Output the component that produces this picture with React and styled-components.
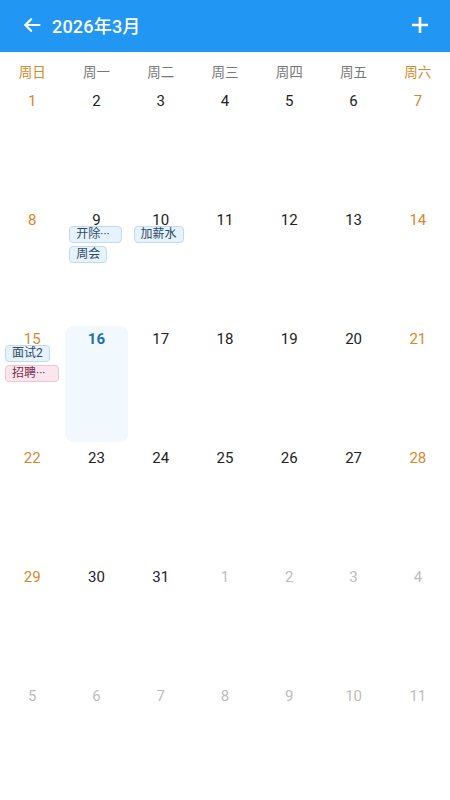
import React from "react";
import styled, { createGlobalStyle } from "styled-components";

const Global = createGlobalStyle`
  html, body { margin: 0; padding: 0; background: #fff; }
  body { font-family: Roboto, "Noto Sans CJK SC", sans-serif; }
  * { box-sizing: border-box; }
`;

const Page = styled.div`
  width: 450px;
  height: 800px;
  display: flex;
  flex-direction: column;
  background: #fff;
  overflow: hidden;
`;

const Header = styled.header`
  height: 52px;
  background: #2196f3;
  display: flex;
  align-items: center;
  padding: 0 18px 2px 20px;
  color: #fff;
  flex-shrink: 0;
`;

const IconBtn = styled.div`
  width: 24px;
  height: 24px;
  display: flex;
  align-items: center;
  justify-content: center;
`;

const Title = styled.h1`
  margin: 0 0 0 8px;
  font-size: 18px;
  font-weight: 500;
  flex: 1;
  letter-spacing: 0.2px;
`;

const WeekRow = styled.div`
  display: grid;
  grid-template-columns: repeat(7, 1fr);
  height: 36px;
  align-items: center;
  flex-shrink: 0;
`;

const WeekLabel = styled.div`
  text-align: center;
  font-size: 13.5px;
  color: ${(p) => (p.$weekend ? "#d4892a" : "#777")};
  padding-top: 2px;
`;

const Grid = styled.div`
  flex-shrink: 0;
  display: grid;
  grid-template-columns: repeat(7, 1fr);
  grid-template-rows: repeat(6, 119px);
`;

const Cell = styled.div`
  position: relative;
  display: flex;
  flex-direction: column;
  align-items: center;
  padding: 7px 0 0;
  margin: 0 1px 3px;
  border-radius: 8px;
  background: ${(p) => (p.$today ? "#f1f8fe" : "transparent")};
  min-width: 0;
`;

const DayNum = styled.div`
  font-size: 15px;
  line-height: 12px;
  font-weight: ${(p) => (p.$today ? 700 : 400)};
  color: ${(p) =>
    p.$today ? "#1e6fb4" : p.$other ? "#bdbdbd" : p.$weekend ? "#d4892a" : "#222"};
`;

const Events = styled.div`
  align-self: stretch;
  display: flex;
  flex-direction: column;
  align-items: flex-start;
  gap: 3px;
  padding: 0 4px;
`;

const Chip = styled.div`
  height: 17px;
  line-height: 15px;
  font-size: 12px;
  padding: 0 6px;
  border-radius: 4px;
  white-space: nowrap;
  border: 1px solid ${(p) => (p.$pink ? "#f2c4d3" : "#bcdcf4")};
  background: ${(p) => (p.$pink ? "#fce6ee" : "#e6f2fc")};
  color: ${(p) => (p.$pink ? "#7a3050" : "#2d4a66")};
`;

const events = {
  9: [{ t: "开除···", w: 53 }, { t: "周会" }],
  10: [{ t: "加薪水" }],
  15: [{ t: "面试2" }, { t: "招聘···", pink: true, w: 54 }],
};

const weekDays = ["周日", "周一", "周二", "周三", "周四", "周五", "周六"];

const cells = [];
for (let d = 1; d <= 31; d++) cells.push({ d, other: false });
for (let d = 1; d <= 11; d++) cells.push({ d, other: true });

export default function App() {
  return (
    <Page>
      <Global />
      <Header>
        <IconBtn>
          <svg width="20" height="20" viewBox="0 0 24 24" fill="none" stroke="#fff" strokeWidth="2.6" strokeLinecap="round" strokeLinejoin="round">
            <path d="M21 12H4" />
            <path d="M11 5l-7 7 7 7" />
          </svg>
        </IconBtn>
        <Title>2026年3月</Title>
        <IconBtn>
          <svg width="18" height="18" viewBox="0 0 18 18" stroke="#fff" strokeWidth="2.6">
            <path d="M9 1v16M1 9h16" />
          </svg>
        </IconBtn>
      </Header>
      <WeekRow>
        {weekDays.map((w, i) => (
          <WeekLabel key={w} $weekend={i === 0 || i === 6}>{w}</WeekLabel>
        ))}
      </WeekRow>
      <Grid>
        {cells.map((c, i) => {
          const col = i % 7;
          const weekend = col === 0 || col === 6;
          const today = !c.other && c.d === 16;
          const ev = !c.other ? events[c.d] : null;
          return (
            <Cell key={i} $today={today}>
              <DayNum $today={today} $other={c.other} $weekend={weekend}>{c.d}</DayNum>
              {ev && (
                <Events>
                  {ev.map((e, j) => (
                    <Chip key={j} $pink={e.pink} style={e.w ? { width: e.w } : undefined}>{e.t}</Chip>
                  ))}
                </Events>
              )}
            </Cell>
          );
        })}
      </Grid>
    </Page>
  );
}
